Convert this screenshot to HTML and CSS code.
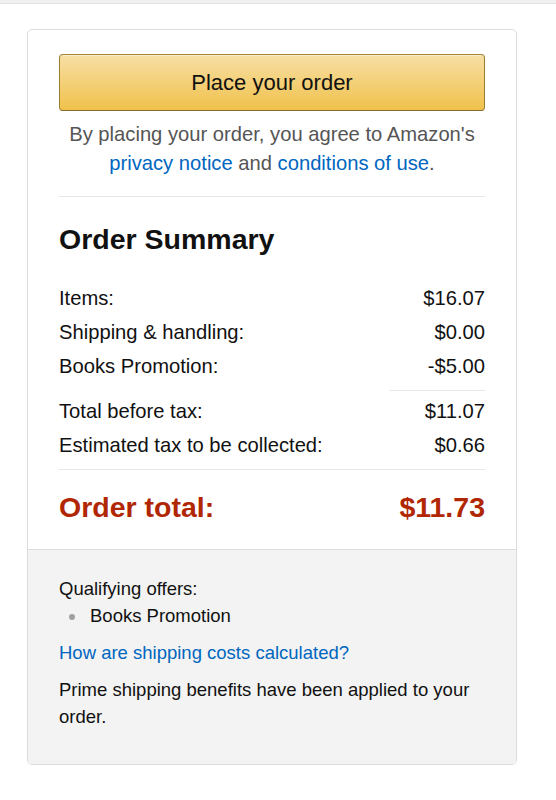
FILE: index.html
```html
<!DOCTYPE html>
<html>
<head>
<meta charset="utf-8">
<link rel="stylesheet" href="styles.css">
</head>
<body>
<div class="topbar"></div>
<div class="card">
  <div class="card-main">
    <button class="place-btn">Place your order</button>
    <p class="agree">By placing your order, you agree to Amazon's <a href="#">privacy notice</a> and <a href="#">conditions of use</a>.</p>
    <hr class="divider">
    <h3 class="summary-title">Order Summary</h3>
    <div class="rows">
      <div class="row"><span>Items:</span><span>$16.07</span></div>
      <div class="row"><span>Shipping &amp; handling:</span><span>$0.00</span></div>
      <div class="row"><span>Books Promotion:</span><span>-$5.00</span></div>
    </div>
    <div class="short-rule"></div>
    <div class="rows">
      <div class="row"><span>Total before tax:</span><span>$11.07</span></div>
      <div class="row"><span>Estimated tax to be collected:</span><span>$0.66</span></div>
    </div>
    <hr class="divider">
    <div class="row total"><span>Order total:</span><span>$11.73</span></div>
  </div>
  <div class="card-foot">
    <p class="offers">Qualifying offers:</p>
    <ul class="offer-list">
      <li>Books Promotion</li>
    </ul>
    <a class="ship-link" href="#">How are shipping costs calculated?</a>
    <p class="prime">Prime shipping benefits have been applied to your order.</p>
  </div>
</div>
</body>
</html>
```
FILE: styles.css
```css
html, body {
  margin: 0;
  padding: 0;
  background: #fff;
}
body {
  font-family: "Liberation Sans", Arial, Helvetica, sans-serif;
  color: #111;
  font-size: 20.2px;
}
.topbar {
  height: 3px;
  background: #f0f0f0;
  border-bottom: 1px solid #e2e2e2;
}
.card {
  margin: 25px 0 0 27px;
  width: 488px;
  border: 1px solid #dddddd;
  border-radius: 5px;
  overflow: hidden;
}
.card-main {
  padding: 24px 31px 25px 31px;
}
.place-btn {
  display: block;
  width: 100%;
  height: 57px;
  border: 1px solid;
  border-color: #a88734 #9c7e31 #846a29;
  border-radius: 4px;
  background: linear-gradient(to bottom, #f7dfa5, #f0c14b);
  box-shadow: inset 0 1px 0 rgba(255,255,255,0.4);
  font-family: inherit;
  font-size: 22px;
  color: #111;
  padding: 0;
  margin: 0;
}
.agree {
  margin: 9px 0 0 0;
  text-align: center;
  color: #555;
  line-height: 29px;
}
.agree a, .ship-link {
  color: #0066c0;
  text-decoration: none;
}
.divider {
  border: 0;
  border-top: 1px solid #e7e7e7;
  margin: 18px 0 0 0;
}
.summary-title {
  margin: 25px 0 0 0;
  font-size: 28.5px;
  line-height: 34px;
  font-weight: bold;
}
.rows {
  margin-top: 25px;
}
.row {
  display: flex;
  justify-content: space-between;
  line-height: 34px;
}
.short-rule {
  margin: 7px 0 3px auto;
  width: 95px;
  border-top: 1px solid #e7e7e7;
}
.short-rule + .rows {
  margin-top: 0;
}
.rows + .divider {
  margin-top: 7px;
}
.row.total {
  margin-top: 20px;
  font-size: 28.5px;
  font-weight: bold;
  color: #b12704;
}
.card-foot {
  background: #f3f3f3;
  border-top: 1px solid #dddddd;
  padding: 25px 31px 34px 31px;
  font-size: 18.5px;
  line-height: 27px;
}
.offers {
  margin: 0;
}
.offer-list {
  margin: 0;
  padding: 0 0 0 31px;
  list-style: none;
}
.offer-list li {
  position: relative;
}
.offer-list li::before {
  content: "";
  position: absolute;
  left: -21px;
  top: 12px;
  width: 6px;
  height: 6px;
  border-radius: 50%;
  background: #a0a0a0;
}
.ship-link {
  display: block;
  margin-top: 10px;
}
.prime {
  margin: 10px 0 0 0;
}
```
